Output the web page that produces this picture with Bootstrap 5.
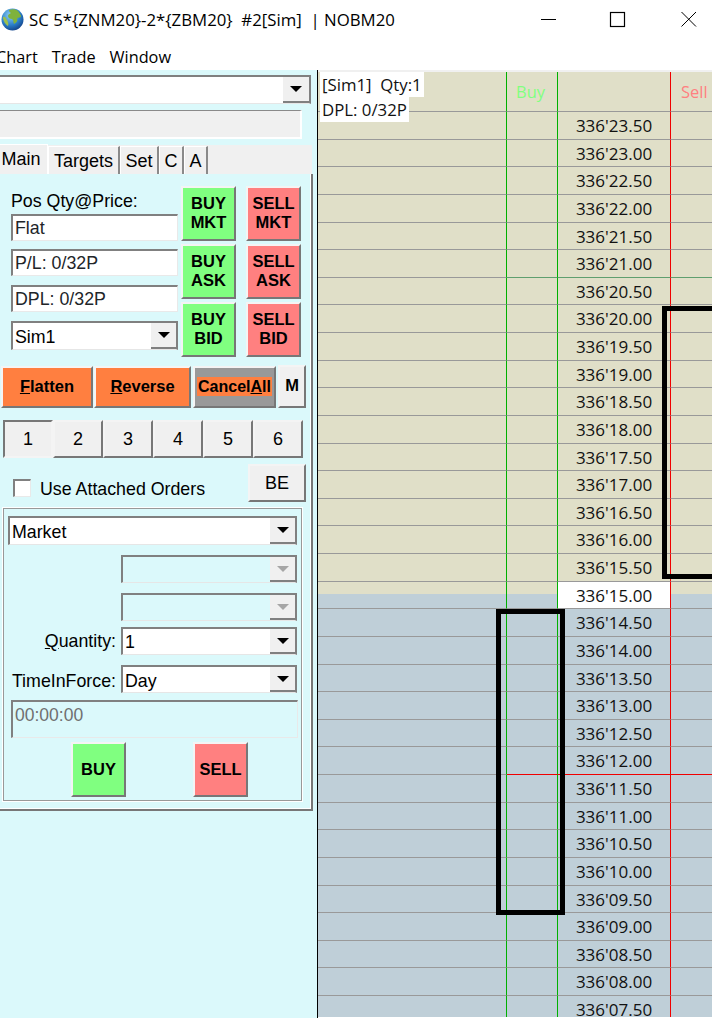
<!DOCTYPE html>
<html lang="en">
<head>
<meta charset="utf-8">
<title>SC</title>
<link href="https://cdn.jsdelivr.net/npm/bootstrap@5.3.0/dist/css/bootstrap.min.css" rel="stylesheet">
<style>
html,body{height:100%;margin:0;overflow:hidden;background:#fff}
body{font-family:"Liberation Sans",Arial,sans-serif;color:#000}
.win-ui{font-family:"Open Sans","Noto Sans",sans-serif}
.titlebar{height:40px;font-size:16.8px;line-height:40px;white-space:pre;padding-left:1px}
.titlebar .globe{margin-right:5px;margin-top:8px;flex:none}
.winbtns{margin-left:auto;width:171px;height:40px}
.winbtns svg{display:block}
.menubar{height:30px;font-size:16.3px;gap:14px;margin-left:-4px;line-height:34px}
.mainarea{height:948px}
.side{width:317px;background:#dbf9fb;overflow:hidden;flex:none;font-size:17.8px}
.vline{width:1px;background:#000;flex:none}
.chart{flex:1 1 auto;position:relative;overflow:hidden;min-width:0}

/* win32 bevels */
.sunk{border-style:solid;border-width:2px 1px 1px 2px;border-color:#808080 #e9e9e9 #e9e9e9 #808080;background:#fff;border-radius:0;box-shadow:none}
.sel{display:flex;align-items:stretch;border-style:solid;border-width:2px 2px 1px 2px;border-color:#808080 #808080 #e6e6e6 #808080;background:#fff;line-height:1}
.sel .val{flex:1;padding:3px 0 0 2px;display:flex;align-items:center}
.sel .arr{width:25px;flex:none;background:#f0f0f0;box-shadow:inset 0 -2px 0 #808080;padding-bottom:2px;display:flex;align-items:center;justify-content:center}
.tri{width:0;height:0;border-left:6px solid transparent;border-right:6px solid transparent;border-top:6px solid #000}
.sel.off{background:#dbf9fb}
.sel.off .tri{border-top-color:#a6a6a6}
.rbtn{border-style:solid;border-width:2px;border-color:#f4f4f4 #777 #777 #f4f4f4;background:#f0f0f0;border-radius:0;padding:0;color:#000;display:flex;align-items:center;justify-content:center;text-align:center;line-height:19px;font-size:16.5px}
.rbtn:hover{color:#000}
.fw{font-weight:700}
.go{background:#80ff80}
.stop{background:#ff8080}
.or{background:#ff7f40}
.w55{width:55px;height:55px}
.bcol .rbtn{padding-bottom:2px}
.actions .rbtn{padding-bottom:2px}
.s1{width:315px;height:29px;margin-top:5px;margin-left:-4px}
.s1 .arr{width:26px}
.s2{width:306px;height:29px;margin-top:6px;margin-left:-4px;background:#f0f0f0;border-style:solid;border-width:1px 2px 2px 1px;border-color:#8a8a8a #fff #fff #8a8a8a}
.tabstrip{width:312px;height:30px;margin-top:5px;background:#f0f0f0;box-shadow:inset 0 1px 0 #dbf9fb;align-items:flex-end;font-size:18px}
.tb{height:28px;border-top:1px solid #fff;border-left:1px solid #fff;border-right:2px solid #8a8a8a;background:#f0f0f0;padding-top:3px;text-align:center;line-height:23px}
.tb.on{height:30px;padding:3px 5px 0 0;border-right:1px solid #fff;border-left:0}
.t1{width:48px}.t2{width:72px}.t3{width:39px}.t4{width:25px}.t5{width:24px}
.panel{width:313px;height:637px;border-right:2px solid #777;border-bottom:2px solid #777;box-shadow:inset -1px -1px 0 #fff;padding-top:12px;line-height:1}
.topgrid{margin-left:11px}
.lcol{width:167px}
.plabel{height:28px;line-height:30px;white-space:nowrap}
.fld{width:167px;height:27px;padding:0 0 0 2px;line-height:25px;margin-bottom:8px;font-size:17.8px}
.fld.sp{margin-bottom:9px}
.sim{width:167px;height:29px}
.bcol{width:55px;margin-left:3px;gap:3px}
.bcol+.bcol{margin-left:10px}
.actions{margin-top:9px;margin-left:1px;height:42px}
.a1{width:92px;height:42px}
.a2{width:97px;height:42px;margin-left:1px}
.a3{width:83px;height:42px;margin-left:2px;background:#999;font-size:16px}
.a3>span{background:#ff7f40;padding:0 1px}
.a4{width:28px;height:43px;margin-left:2px;margin-top:-1px}
.u{text-decoration:underline}
.numtabs{margin-top:12px;margin-left:3px}
.nt{width:50px;height:38px;font-size:18px}
.nt.on{border-color:#777 #f4f4f4 #f4f4f4 #777}
.attrow{margin-top:6px;height:38px;width:306px}
.chk{width:18px;height:18px;margin:15px 9px 0 13px;flex:none}
.attlbl{margin-top:14px;line-height:22px;white-space:nowrap}
.bebtn{width:58px;height:38px;margin-left:auto;font-size:18px}
.grp{width:299px;height:293px;margin:6px 0 0 3px;border:1px solid #999;box-shadow:0 0 0 1px #fff;padding-top:7px}
.mkt{width:289px;height:29px;margin-left:4px}
.frow{margin-top:10px;height:28px}
.frow.tight{margin-top:6px}
.frow .lb{width:112px;text-align:right;line-height:29px;margin-right:5px;white-space:nowrap}
.frow.tif .lb{line-height:33px}
.frow.tif .val{padding-top:5px}
.frow .sel{width:176px;height:28px}
.memo{width:287px;height:38px;margin:7px 0 0 7px;background:#dbf9fb;color:#707070;padding-left:2px;line-height:26px;font-size:17.5px}
.ordrow{margin-top:4px;margin-left:67px;gap:67px}

/* ladder */
.strip{height:2px;background:#f0f0f0}
.lhead,.lrow{display:grid;grid-template-columns:189px 51px 113px 1fr}
.lhead{height:39px;background:#e0dfc8}
.lrow{height:27.64px}
.lrow.endrow{height:22.4px}
.lrow>div{border-top:1px solid #999}
.lrow>div:nth-child(-n+3),.lhead>div:nth-child(-n+3){border-right:1px solid #00b000}
.lrow>div:nth-child(3),.lhead>div:nth-child(3){border-right-color:#f00000}
.k{background:#e0dfc8}
.b{background:#bfcfd8}
.split{background:linear-gradient(#e0dfc8 50%,#bfcfd8 50%)}
.px{font-size:17px;line-height:24px;padding-top:2px;text-align:center;font-family:"Open Sans","Noto Sans",sans-serif;color:#111}
.endrow .px{line-height:12px;padding-top:8px}
.inside{background:#fff}
.ln-g>div:nth-child(n+2){border-top-color:#5f9f6f}
.ln-r>div:nth-child(n+2){border-top-color:#f00000}
.hb{color:#80ff80;font-size:16.5px;text-align:center;line-height:40px;padding-right:3px}
.hs{color:#ff8080;font-size:16.5px;padding-left:10px;line-height:40px}
.tag{position:absolute;left:2px;background:#fff;font-size:16.8px;line-height:25px;padding:0 2px;white-space:pre;color:#111}
.tag1{top:2px}
.tag2{top:27px}
.boxa,.boxb{position:absolute;border:5px solid #000}
.boxa{left:178px;top:539px;width:69px;height:306px}
.boxb{left:344px;top:236px;width:100px;height:273px}
</style>
</head>
<body>
<div class="d-flex titlebar win-ui">
  <svg class="globe" width="23" height="23" viewBox="0 0 23 23"><defs><radialGradient id="gl" cx="40%" cy="30%" r="75%"><stop offset="0" stop-color="#8fd0f5"/><stop offset=".6" stop-color="#2b7fc9"/><stop offset="1" stop-color="#123f86"/></radialGradient></defs><circle cx="11.500" cy="11.500" r="11" fill="url(#gl)"/><path d="M8 2c3-1 7-1 9 1 1 2 3 3 3 6-2 1-3 0-4 2 1 2-1 4-3 5-1-2 0-4-2-5-2 0-4-1-4-3 0-2 2-2 3-3-1-1-2-1-2-3z" fill="#7fb23c"/><path d="M2 9c2-1 3 1 4 3 1 2 2 4 1 6-2-1-5-5-5-9z" fill="#9fc04a"/></svg><span>SC 5*{ZNM20}-2*{ZBM20}  #2[Sim]  | NOBM20</span>
  <div class="winbtns"><svg width="171" height="40" viewBox="0 0 171 40"><path d="M0 19.500h15" stroke="#000" fill="none"/><rect x="69.500" y="12.500" width="14" height="14" fill="none" stroke="#000" stroke-width="1.200"/><path d="M140.500 12l14.500 14.500M155 12l-14.500 14.500" stroke="#000" fill="none"/></svg></div>
</div>
<div class="d-flex menubar win-ui"><span>Chart</span><span>Trade</span><span>Window</span></div>
<div class="d-flex mainarea">
  <div class="side">
    <div class="sel s1"><div class="val"></div><div class="arr"><span class="tri"></span></div></div>
    <div class="s2"></div>
    <div class="d-flex tabstrip"><div class="tb on t1">Main</div><div class="tb t2">Targets</div><div class="tb t3">Set</div><div class="tb t4">C</div><div class="tb t5">A</div></div>
    <div class="panel">
      <div class="d-flex topgrid">
        <div class="lcol">
          <div class="plabel">Pos Qty@Price:</div>
          <div class="form-control sunk fld">Flat</div>
          <div class="form-control sunk fld sp">P/L: 0/32P</div>
          <div class="form-control sunk fld sp">DPL: 0/32P</div>
          <div class="sel sim"><div class="val">Sim1</div><div class="arr"><span class="tri"></span></div></div>
        </div>
        <div class="d-flex flex-column bcol">
          <button class="btn rbtn go fw w55">BUY<br>MKT</button>
          <button class="btn rbtn go fw w55">BUY<br>ASK</button>
          <button class="btn rbtn go fw w55">BUY<br>BID</button>
        </div>
        <div class="d-flex flex-column bcol">
          <button class="btn rbtn stop fw w55">SELL<br>MKT</button>
          <button class="btn rbtn stop fw w55">SELL<br>ASK</button>
          <button class="btn rbtn stop fw w55">SELL<br>BID</button>
        </div>
      </div>
      <div class="d-flex actions">
        <button class="btn rbtn or fw a1"><span><span class="u">F</span>latten</span></button>
        <button class="btn rbtn or fw a2"><span><span class="u">R</span>everse</span></button>
        <button class="btn rbtn fw a3"><span>Cancel<span class="u">A</span>ll</span></button>
        <button class="btn rbtn fw a4">M</button>
      </div>
      <div class="d-flex numtabs">
        <button class="btn rbtn nt on">1</button><button class="btn rbtn nt">2</button><button class="btn rbtn nt">3</button><button class="btn rbtn nt">4</button><button class="btn rbtn nt">5</button><button class="btn rbtn nt">6</button>
      </div>
      <div class="d-flex attrow">
        <div class="sunk chk"></div>
        <div class="attlbl">Use Attached Orders</div>
        <button class="btn rbtn bebtn">BE</button>
      </div>
      <div class="grp">
        <div class="sel mkt"><div class="val">Market</div><div class="arr"><span class="tri"></span></div></div>
        <div class="d-flex frow"><div class="lb"></div><div class="sel off"><div class="val"></div><div class="arr"><span class="tri"></span></div></div></div>
        <div class="d-flex frow"><div class="lb"></div><div class="sel off"><div class="val"></div><div class="arr"><span class="tri"></span></div></div></div>
        <div class="d-flex frow tight"><div class="lb"><span class="u">Q</span>uantity:</div><div class="sel"><div class="val">1</div><div class="arr"><span class="tri"></span></div></div></div>
        <div class="d-flex frow tif"><div class="lb">TimeInForce:</div><div class="sel"><div class="val">Day</div><div class="arr"><span class="tri"></span></div></div></div>
        <div class="sunk memo">00:00:00</div>
        <div class="d-flex ordrow">
          <button class="btn rbtn go fw w55">BUY</button>
          <button class="btn rbtn stop fw w55">SELL</button>
        </div>
      </div>
    </div>
  </div>
  <div class="vline"></div>
  <div class="chart">
    <div class="strip"></div>
    <div class="lhead"><div></div><div class="hb win-ui">Buy</div><div></div><div class="hs win-ui">Sell</div></div>
    <div class="lrow k"><div></div><div></div><div class="px">336'23.50</div><div></div></div>
    <div class="lrow k"><div></div><div></div><div class="px">336'23.00</div><div></div></div>
    <div class="lrow k"><div></div><div></div><div class="px">336'22.50</div><div></div></div>
    <div class="lrow k"><div></div><div></div><div class="px">336'22.00</div><div></div></div>
    <div class="lrow k"><div></div><div></div><div class="px">336'21.50</div><div></div></div>
    <div class="lrow k"><div></div><div></div><div class="px">336'21.00</div><div></div></div>
    <div class="lrow k ln-g"><div></div><div></div><div class="px">336'20.50</div><div></div></div>
    <div class="lrow k"><div></div><div></div><div class="px">336'20.00</div><div></div></div>
    <div class="lrow k"><div></div><div></div><div class="px">336'19.50</div><div></div></div>
    <div class="lrow k"><div></div><div></div><div class="px">336'19.00</div><div></div></div>
    <div class="lrow k"><div></div><div></div><div class="px">336'18.50</div><div></div></div>
    <div class="lrow k"><div></div><div></div><div class="px">336'18.00</div><div></div></div>
    <div class="lrow k"><div></div><div></div><div class="px">336'17.50</div><div></div></div>
    <div class="lrow k"><div></div><div></div><div class="px">336'17.00</div><div></div></div>
    <div class="lrow k"><div></div><div></div><div class="px">336'16.50</div><div></div></div>
    <div class="lrow k"><div></div><div></div><div class="px">336'16.00</div><div></div></div>
    <div class="lrow k"><div></div><div></div><div class="px">336'15.50</div><div></div></div>
    <div class="lrow split"><div></div><div></div><div class="px inside">336'15.00</div><div></div></div>
    <div class="lrow b"><div></div><div></div><div class="px">336'14.50</div><div></div></div>
    <div class="lrow b"><div></div><div></div><div class="px">336'14.00</div><div></div></div>
    <div class="lrow b"><div></div><div></div><div class="px">336'13.50</div><div></div></div>
    <div class="lrow b"><div></div><div></div><div class="px">336'13.00</div><div></div></div>
    <div class="lrow b"><div></div><div></div><div class="px">336'12.50</div><div></div></div>
    <div class="lrow b"><div></div><div></div><div class="px">336'12.00</div><div></div></div>
    <div class="lrow b ln-r"><div></div><div></div><div class="px">336'11.50</div><div></div></div>
    <div class="lrow b"><div></div><div></div><div class="px">336'11.00</div><div></div></div>
    <div class="lrow b"><div></div><div></div><div class="px">336'10.50</div><div></div></div>
    <div class="lrow b"><div></div><div></div><div class="px">336'10.00</div><div></div></div>
    <div class="lrow b"><div></div><div></div><div class="px">336'09.50</div><div></div></div>
    <div class="lrow b"><div></div><div></div><div class="px">336'09.00</div><div></div></div>
    <div class="lrow b"><div></div><div></div><div class="px">336'08.50</div><div></div></div>
    <div class="lrow b"><div></div><div></div><div class="px">336'08.00</div><div></div></div>
    <div class="lrow b endrow"><div></div><div></div><div class="px">336'07.50</div><div></div></div>
    <div class="tag tag1 win-ui">[Sim1]  Qty:1</div>
    <div class="tag tag2 win-ui">DPL: 0/32P</div>
    <div class="boxa"></div>
    <div class="boxb"></div>
  </div>
</div>
</body>
</html>
